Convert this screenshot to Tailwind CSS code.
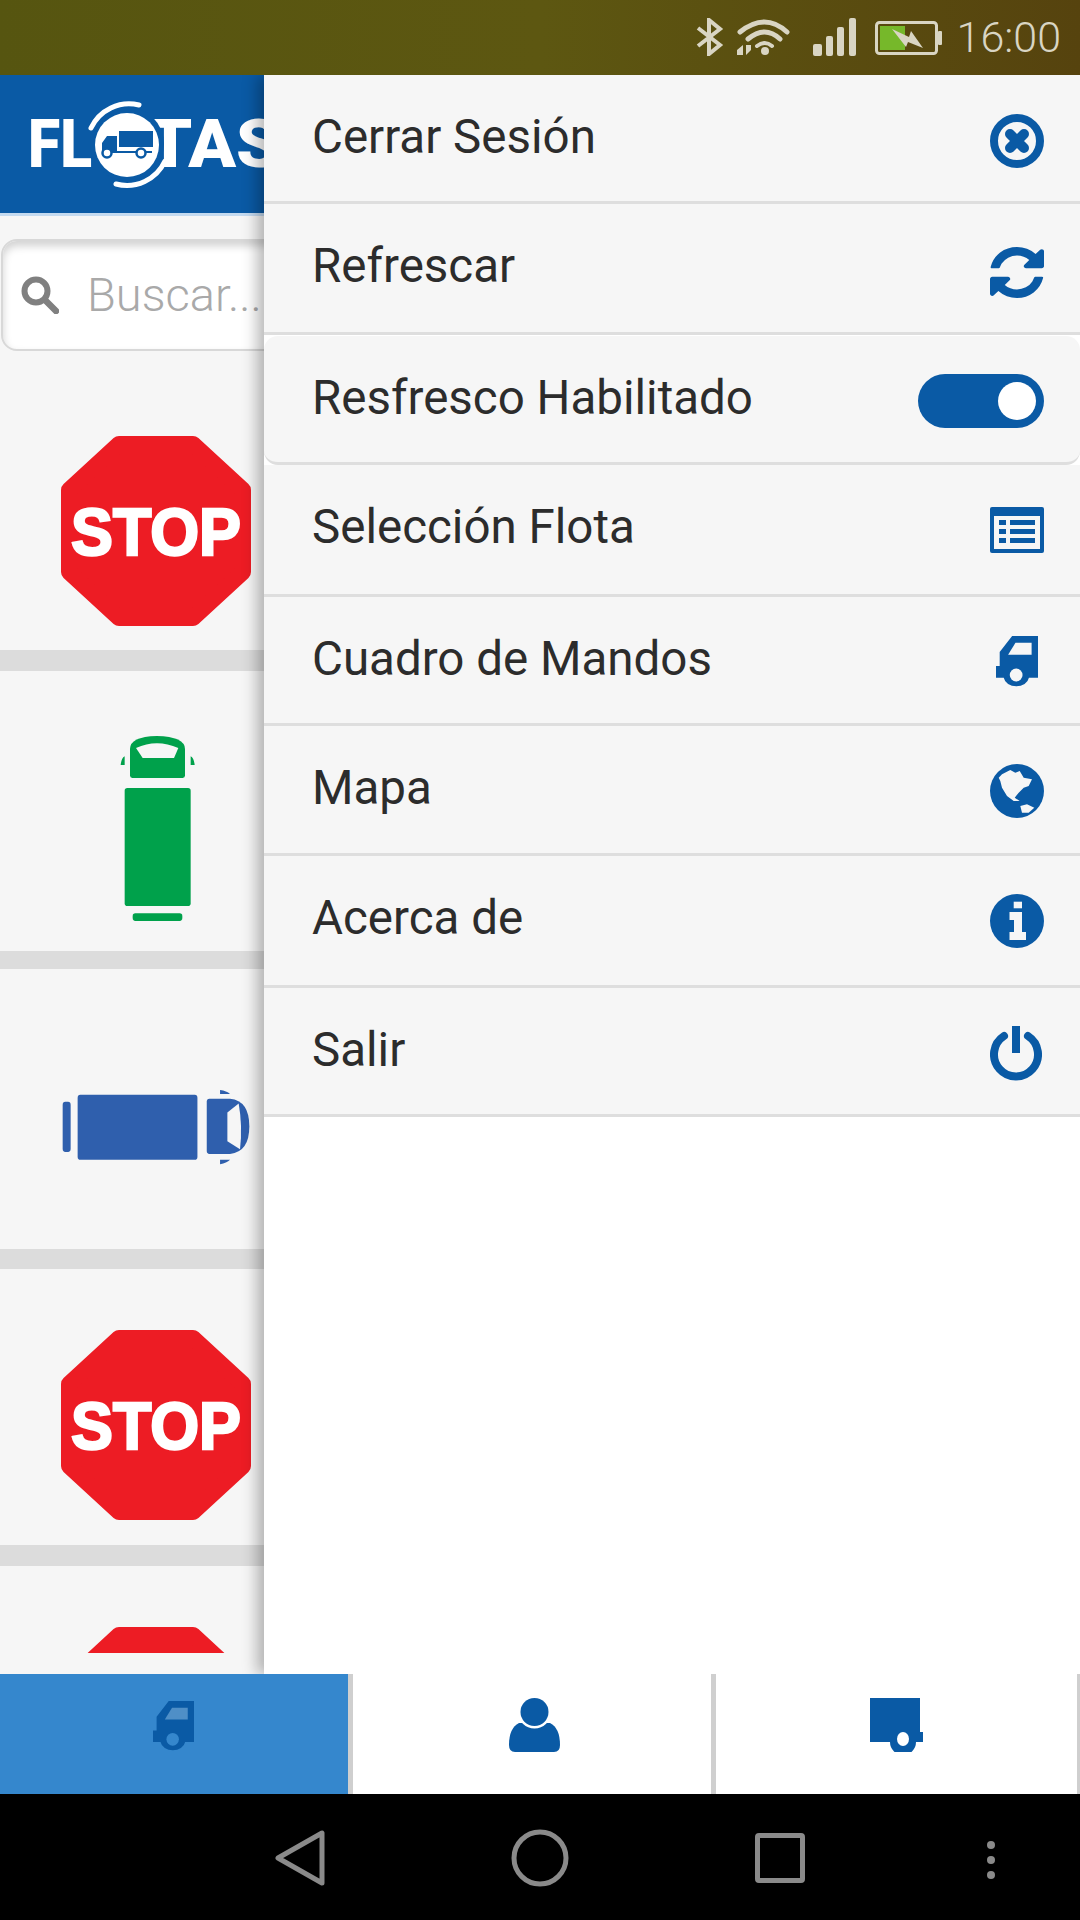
<!DOCTYPE html>
<html lang="es">
<head>
    <meta charset="UTF-8">
    <meta name="viewport" content="width=device-width, initial-scale=1.0">
    <title>Flotas</title>
    <script src="https://cdn.jsdelivr.net/npm/@tailwindcss/browser@4"></script>
</head>
<body class="bg-white">
<div class="w-[1080px] h-[1920px] flex flex-col overflow-hidden font-[Roboto,sans-serif]">

    <!-- status bar -->
    <div class="h-[75px] flex items-center justify-end pr-[19px] bg-linear-to-r from-[#565510] via-[#5d5711] to-[#56430e] text-[#d9d5c3]">
        <svg class="w-[28px] h-[38px] mt-[-1px]" viewBox="0 0 28 38" fill="none" stroke="currentColor" stroke-width="4"><path d="M2 10 L24 27 L13 36 V2 L24 11 L2 28"/></svg>
        <svg class="w-[56px] h-[38px] ml-[11px] mt-[-1px]" viewBox="0 0 56 38" fill="none" stroke="currentColor" stroke-linecap="round" stroke-width="5">
            <path d="M5 14 Q30 -6 52 14"/><path d="M13 21 Q30 7 45 21"/><path d="M22 28 Q30 22 37 28" stroke-width="4"/>
            <circle cx="30" cy="33" r="4" fill="currentColor" stroke="none"/>
            <path d="M8 27 L2 32 V37 H8 Z M11 27 V37 L16 32 V27 Z" fill="currentColor" stroke="none"/>
        </svg>
        <svg class="w-[44px] h-[38px] ml-[22px] mt-[-1px]" viewBox="0 0 44 38" fill="currentColor">
            <rect x="0" y="26" width="9" height="12" rx="2"/><rect x="13" y="18" width="7" height="20" rx="2"/><rect x="24" y="9" width="7" height="29" rx="2"/><rect x="36" y="0" width="7" height="38" rx="2"/>
        </svg>
        <svg class="w-[68px] h-[34px] ml-[18px]" viewBox="0 0 68 34">
            <rect x="1.5" y="1.5" width="60" height="31" rx="3" fill="none" stroke="currentColor" stroke-width="3"/>
            <rect x="5" y="5" width="25" height="24" fill="#76b82a"/>
            <rect x="63" y="10" width="4" height="14" rx="1" fill="currentColor"/>
            <path d="M17 8 L34 16 L36 10 L48 27 L33 21 L31 26 Z" fill="currentColor"/>
        </svg>
        <span class="ml-[14px] text-[43px] leading-none font-light">16:00</span>
    </div>

    <!-- page behind the drawer -->
    <div class="relative flex-1 overflow-hidden bg-[#f6f6f6]">
        <div class="w-[312px]">
            <div class="h-[141px] bg-[#0a5aa5] border-b-[3px] border-[#c4daf0]">
                <svg class="w-[312px] h-[138px]" viewBox="0 75 312 138">
                    <text x="28" y="167" font-family="Roboto" font-weight="900" font-size="66" fill="#fff" textLength="64" lengthAdjust="spacingAndGlyphs">FL</text>
                    <text x="148" y="167" font-family="Roboto" font-weight="900" font-size="66" fill="#fff" textLength="132" lengthAdjust="spacingAndGlyphs">TAS</text>
                    <circle cx="127" cy="144" r="37" fill="#0a5aa5"/>
                    <circle cx="127" cy="145" r="32" fill="#fff"/>
                    <path d="M91 128 A42 42 0 0 1 139 105" fill="none" stroke="#fff" stroke-width="5" stroke-linecap="round"/>
                    <path d="M165 161 A42 42 0 0 1 116 184" fill="none" stroke="#fff" stroke-width="5" stroke-linecap="round"/>
                    <path d="M119 131 H153 V147 H119 Z M102 152 V143 L107 136 H117 V152 Z" fill="#0a5aa5"/>
                    <path d="M104 152 H152" stroke="#0a5aa5" stroke-width="2"/>
                    <circle cx="107" cy="153" r="4.5" fill="#fff" stroke="#0a5aa5" stroke-width="2.5"/>
                    <circle cx="141" cy="153" r="4.5" fill="#fff" stroke="#0a5aa5" stroke-width="2.5"/>
                </svg>
            </div>

            <!-- search -->
            <div class="h-[159px] pt-[23px] pl-[1px]">
                <div class="h-[112px] bg-white rounded-[16px] border-2 border-[#d8d8d8] shadow-[inset_0_5px_9px_rgba(0,0,0,0.18)] flex items-center pl-[18px]">
                    <svg class="w-[38px] h-[38px]" viewBox="0 0 38 38" fill="none" stroke="#808080">
                        <circle cx="15" cy="15" r="11.5" stroke-width="6"/><path d="M24 24 L35 35" stroke-width="6.5" stroke-linecap="round"/>
                    </svg>
                    <span class="ml-[28px] text-[47px] font-light text-[#a9a9a9] whitespace-nowrap">Buscar...</span>
                </div>
            </div>

            <!-- vehicle list -->
            <div class="h-[296px] pt-[61px] pl-[61px] border-b-[21px] border-[#dcdcdc] box-border">
                <svg class="w-[190px] h-[190px]" viewBox="0 0 190 190">
                    <polygon points="58,8 132,8 182,54 182,136 132,182 58,182 8,136 8,54" fill="#ed1c24" stroke="#ed1c24" stroke-width="16" stroke-linejoin="round"/>
                    <text x="10" y="119" font-family="Liberation Sans" font-weight="700" font-size="66" fill="#fff" stroke="#fff" stroke-width="2.5" textLength="170" lengthAdjust="spacingAndGlyphs">STOP</text>
                </svg>
            </div>
            <div class="h-[298px] pt-[64px] pl-[120px] border-b-[18px] border-[#dcdcdc] box-border">
                <svg class="w-[75px] h-[187px]" viewBox="360 935 225 530" preserveAspectRatio="none" fill="#00a14b">
                    <path d="M390 1050 Q390 1057 397 1057 H548 Q555 1057 555 1050 V975 Q555 940 470 938 Q390 940 390 975 Z"/>
                    <path d="M408 972 Q470 945 535 972 L522 1000 H428 Z" fill="#f6f6f6"/>
                    <path d="M362 1020 Q364 1000 374 995 V1020 Z M572 995 Q582 1000 584 1020 H572 Z"/>
                    <rect x="374" y="1085" width="198" height="335" rx="8"/>
                    <rect x="398" y="1440" width="149" height="22" rx="8"/>
                </svg>
            </div>
            <div class="h-[300px] pt-[121px] pl-[62px] border-b-[20px] border-[#dcdcdc] box-border">
                <svg class="w-[188px] h-[75px]" viewBox="185 78 565 190" preserveAspectRatio="none" fill="#2f5fad">
                    <rect x="187" y="108" width="24" height="127" rx="8"/>
                    <rect x="232" y="90" width="360" height="165" rx="8"/>
                    <path d="M620 108 Q620 100 628 100 H690 Q748 105 748 170 Q748 235 690 240 H628 Q620 240 620 232 Z"/>
                    <path d="M682 135 L716 112 Q728 170 720 228 L682 208 Z" fill="#f6f6f6"/>
                    <path d="M660 78 Q680 80 690 88 H660 Z M660 255 H690 Q680 264 660 266 Z"/>
                </svg>
            </div>
            <div class="h-[297px] pt-[61px] pl-[61px] border-b-[21px] border-[#dcdcdc] box-border">
                <svg class="w-[190px] h-[190px]" viewBox="0 0 190 190">
                    <polygon points="58,8 132,8 182,54 182,136 132,182 58,182 8,136 8,54" fill="#ed1c24" stroke="#ed1c24" stroke-width="16" stroke-linejoin="round"/>
                    <text x="10" y="119" font-family="Liberation Sans" font-weight="700" font-size="66" fill="#fff" stroke="#fff" stroke-width="2.5" textLength="170" lengthAdjust="spacingAndGlyphs">STOP</text>
                </svg>
            </div>
            <div class="pt-[61px] pl-[61px]">
                <div class="h-[26px] overflow-hidden">
                    <svg class="w-[190px] h-[190px]" viewBox="0 0 190 190">
                        <polygon points="58,8 132,8 182,54 182,136 132,182 58,182 8,136 8,54" fill="#ed1c24" stroke="#ed1c24" stroke-width="16" stroke-linejoin="round"/>
                    </svg>
                </div>
            </div>
        </div>

        <!-- drawer menu -->
        <div class="absolute top-0 bottom-0 left-[264px] right-0 bg-white shadow-[-7px_0_14px_rgba(0,0,0,0.28)] text-[47.5px] text-[#2c2c2c]">
            <div class="h-[129px] bg-[#f6f6f6] border-b-[3px] border-[#dedede] pl-[48px] pr-[36px] flex items-center justify-between">
                <span class="mb-[1px]">Cerrar Sesión</span>
                <svg class="w-[54px] h-[54px] mt-[5px]" viewBox="0 0 54 54" fill="none" stroke="#0a5aa5">
                    <circle cx="27" cy="27" r="23" stroke-width="8"/><path d="M20 20 L34 34 M34 20 L20 34" stroke-width="10" stroke-linecap="round"/>
                </svg>
            </div>
            <div class="h-[131px] bg-[#f6f6f6] border-b-[3px] border-[#dedede] pl-[48px] pr-[36px] flex items-center justify-between">
                <span class="mb-[2px]">Refrescar</span>
                <svg class="w-[54px] h-[51px] mt-[8px]" viewBox="128 128 1536 1536" preserveAspectRatio="none" fill="#0a5aa5">
                    <path d="M1639 1056q0 5-1 7-64 268-268 434.5t-478 166.5q-146 0-282.5-55t-243.5-157l-129 129q-19 19-45 19t-45-19-19-45v-448q0-26 19-45t45-19h448q26 0 45 19t19 45-19 45l-137 137q71 66 161 102t187 36q134 0 250-65t186-179q11-17 53-117 8-23 30-23h192q13 0 22.5 9.5t9.5 22.5zm25-800v448q0 26-19 45t-45 19h-448q-26 0-45-19t-19-45 19-45l138-138q-148-137-349-137-134 0-250 65t-186 179q-11 17-53 117-8 23-30 23h-199q-13 0-22.5-9.5t-9.5-22.5v-7q65-268 270-434.5t480-166.5q146 0 284 55.5t245 156.5l130-129q19-19 45-19t45 19 19 45z"/>
                </svg>
            </div>
            <div class="h-[129px] bg-[#f6f6f6] rounded-[14px] mt-[1px] border-b-[3px] border-[#dedede] pl-[48px] pr-[36px] flex items-center justify-between">
                <span class="mb-[1px]">Resfresco Habilitado</span>
                <div class="w-[126px] h-[54px] mt-[4px] rounded-full bg-[#0a5aa5] flex items-center justify-end pr-[8px]">
                    <div class="w-[38px] h-[38px] rounded-full bg-white"></div>
                </div>
            </div>
            <div class="h-[132px] bg-[#f6f6f6] border-b-[3px] border-[#dedede] pl-[48px] pr-[36px] flex items-center justify-between">
                <span class="mb-[3px]">Selección Flota</span>
                <svg class="w-[54px] h-[46px]" viewBox="0 0 54 46" fill="#0a5aa5">
                    <rect width="54" height="46" rx="2"/><rect x="4" y="9" width="46" height="33" fill="#f6f6f6"/>
                    <path d="M9 13 H16 V18 H9 Z M20 13 H45 V18 H20 Z M9 22 H16 V27 H9 Z M20 22 H45 V27 H20 Z M9 31 H16 V36 H9 Z M20 31 H45 V36 H20 Z"/>
                </svg>
            </div>
            <div class="h-[129px] bg-[#f6f6f6] border-b-[3px] border-[#dedede] pl-[48px] pr-[42px] flex items-center justify-between">
                <span class="mb-[1px]">Cuadro de Mandos</span>
                <svg class="w-[42px] h-[52px] mt-[4px]" viewBox="107 118 125 152" preserveAspectRatio="none" fill="#0a5aa5">
                    <path d="M155 118 H232 V240 H205 A38 30 0 0 1 130 240 H107 V206 H118 V165 Z"/>
                    <path d="M165 138 H213 V173 H143 Z" fill="#f6f6f6"/><circle cx="167" cy="232" r="19" fill="#f6f6f6"/>
                </svg>
            </div>
            <div class="h-[130px] bg-[#f6f6f6] border-b-[3px] border-[#dedede] pl-[48px] pr-[36px] flex items-center justify-between">
                <span class="mb-[1px]">Mapa</span>
                <svg class="w-[54px] h-[54px] mt-[2px]" viewBox="0 0 54 54">
                    <circle cx="27" cy="27" r="27" fill="#0a5aa5"/>
                    <path d="M8.7 13.7 L12 10.3 L20.3 6 L25.3 8.7 L29.7 7 L33.7 13.7 L42 15.3 L38.7 22 L33.7 23.7 L28.7 28.7 L24.7 33.7 L29.7 37 L23.7 37 L17 32 L12 23.7 L10.3 17 Z" fill="#f6f6f6"/>
                    <path d="M30.3 42 L37 40.3 L44.3 43.7 L38.7 48.7 L32 48.7 Z" fill="#f6f6f6"/>
                </svg>
            </div>
            <div class="h-[132px] bg-[#f6f6f6] border-b-[3px] border-[#dedede] pl-[48px] pr-[36px] flex items-center justify-between">
                <span class="mb-[3px]">Acerca de</span>
                <svg class="w-[54px] h-[54px]" viewBox="0 0 54 54" fill="#f6f6f6">
                    <circle cx="27" cy="27" r="27" fill="#0a5aa5"/>
                    <rect x="23.7" y="7.7" width="8.3" height="6.6"/><path d="M19.5 18 H32 V38 H36 V46 H19.5 V38 H24 V26 H19.5 Z"/>
                </svg>
            </div>
            <div class="h-[129px] bg-[#f6f6f6] border-b-[3px] border-[#dedede] pl-[48px] pr-[38px] flex items-center justify-between">
                <span class="mb-[1px]">Salir</span>
                <svg class="w-[52px] h-[55px] mt-[5px]" viewBox="0 0 52 55" fill="none" stroke="#0a5aa5" stroke-width="8">
                    <path d="M14 10 A22 22 0 1 0 38 10" stroke-linecap="round"/><path d="M26 0 V27"/>
                </svg>
            </div>
        </div>
    </div>

    <!-- bottom tabs -->
    <div class="h-[120px] flex bg-white">
        <div class="w-[353px] h-full flex items-center justify-center bg-[#3587cd] border-r-[5px] border-[#cfcfcf]">
            <svg class="w-[41px] h-[51px] mb-[15px] mr-[2px]" viewBox="107 118 125 152" preserveAspectRatio="none" fill="#0a5aa5">
                <path d="M155 118 H232 V240 H205 A38 30 0 0 1 130 240 H107 V206 H118 V165 Z"/>
                <path d="M165 138 H213 V173 H143 Z" fill="#4f8fc7"/><circle cx="167" cy="232" r="19" fill="#3587cd"/>
            </svg>
        </div>
        <div class="w-[363px] h-full flex items-center justify-center border-r-[5px] border-[#cfcfcf]">
            <svg class="w-[51px] h-[54px] mb-[18px] ml-[4px]" viewBox="0 0 51 54" fill="#0a5aa5">
                <path d="M0 47 Q0 30 10 25 H41 Q51 30 51 47 Q51 54 45 54 H6 Q0 54 0 47 Z"/>
                <circle cx="25.5" cy="14" r="16.5" fill="#fff"/>
                <circle cx="25.5" cy="14" r="14"/>
            </svg>
        </div>
        <div class="flex-1 h-full flex items-center justify-center border-r-[3px] border-[#cfcfcf]">
            <svg class="w-[53px] h-[54px] mb-[18px]" viewBox="0 0 53 54" fill="#0a5aa5">
                <path d="M0 0 H50 V34 H53 V44 H46 A13 13 0 0 1 20 44 H0 Z"/>
                <ellipse cx="33" cy="41" rx="6" ry="7" fill="#fff"/>
            </svg>
        </div>
    </div>

    <!-- android nav bar -->
    <div class="h-[126px] bg-black relative flex items-center text-[#8a8a8a]">
        <svg class="absolute left-[275px] top-[36px] w-[50px] h-[56px]" viewBox="0 0 50 56" fill="none" stroke="currentColor" stroke-width="5" stroke-linejoin="round"><path d="M47 3 V53 L3 28 Z"/></svg>
        <svg class="absolute left-[511px] top-[35px] w-[58px] h-[58px]" viewBox="0 0 58 58" fill="none" stroke="currentColor" stroke-width="5"><circle cx="29" cy="29" r="26"/></svg>
        <div class="absolute left-[755px] top-[39px] w-[50px] h-[50px] border-[5px] border-current rounded-[4px]"></div>
        <div class="absolute left-[987px] top-[47px] flex flex-col gap-[7px]">
            <div class="w-[8px] h-[8px] rounded-full bg-current"></div>
            <div class="w-[8px] h-[8px] rounded-full bg-current"></div>
            <div class="w-[8px] h-[8px] rounded-full bg-current"></div>
        </div>
    </div>
</div>
</body>
</html>
